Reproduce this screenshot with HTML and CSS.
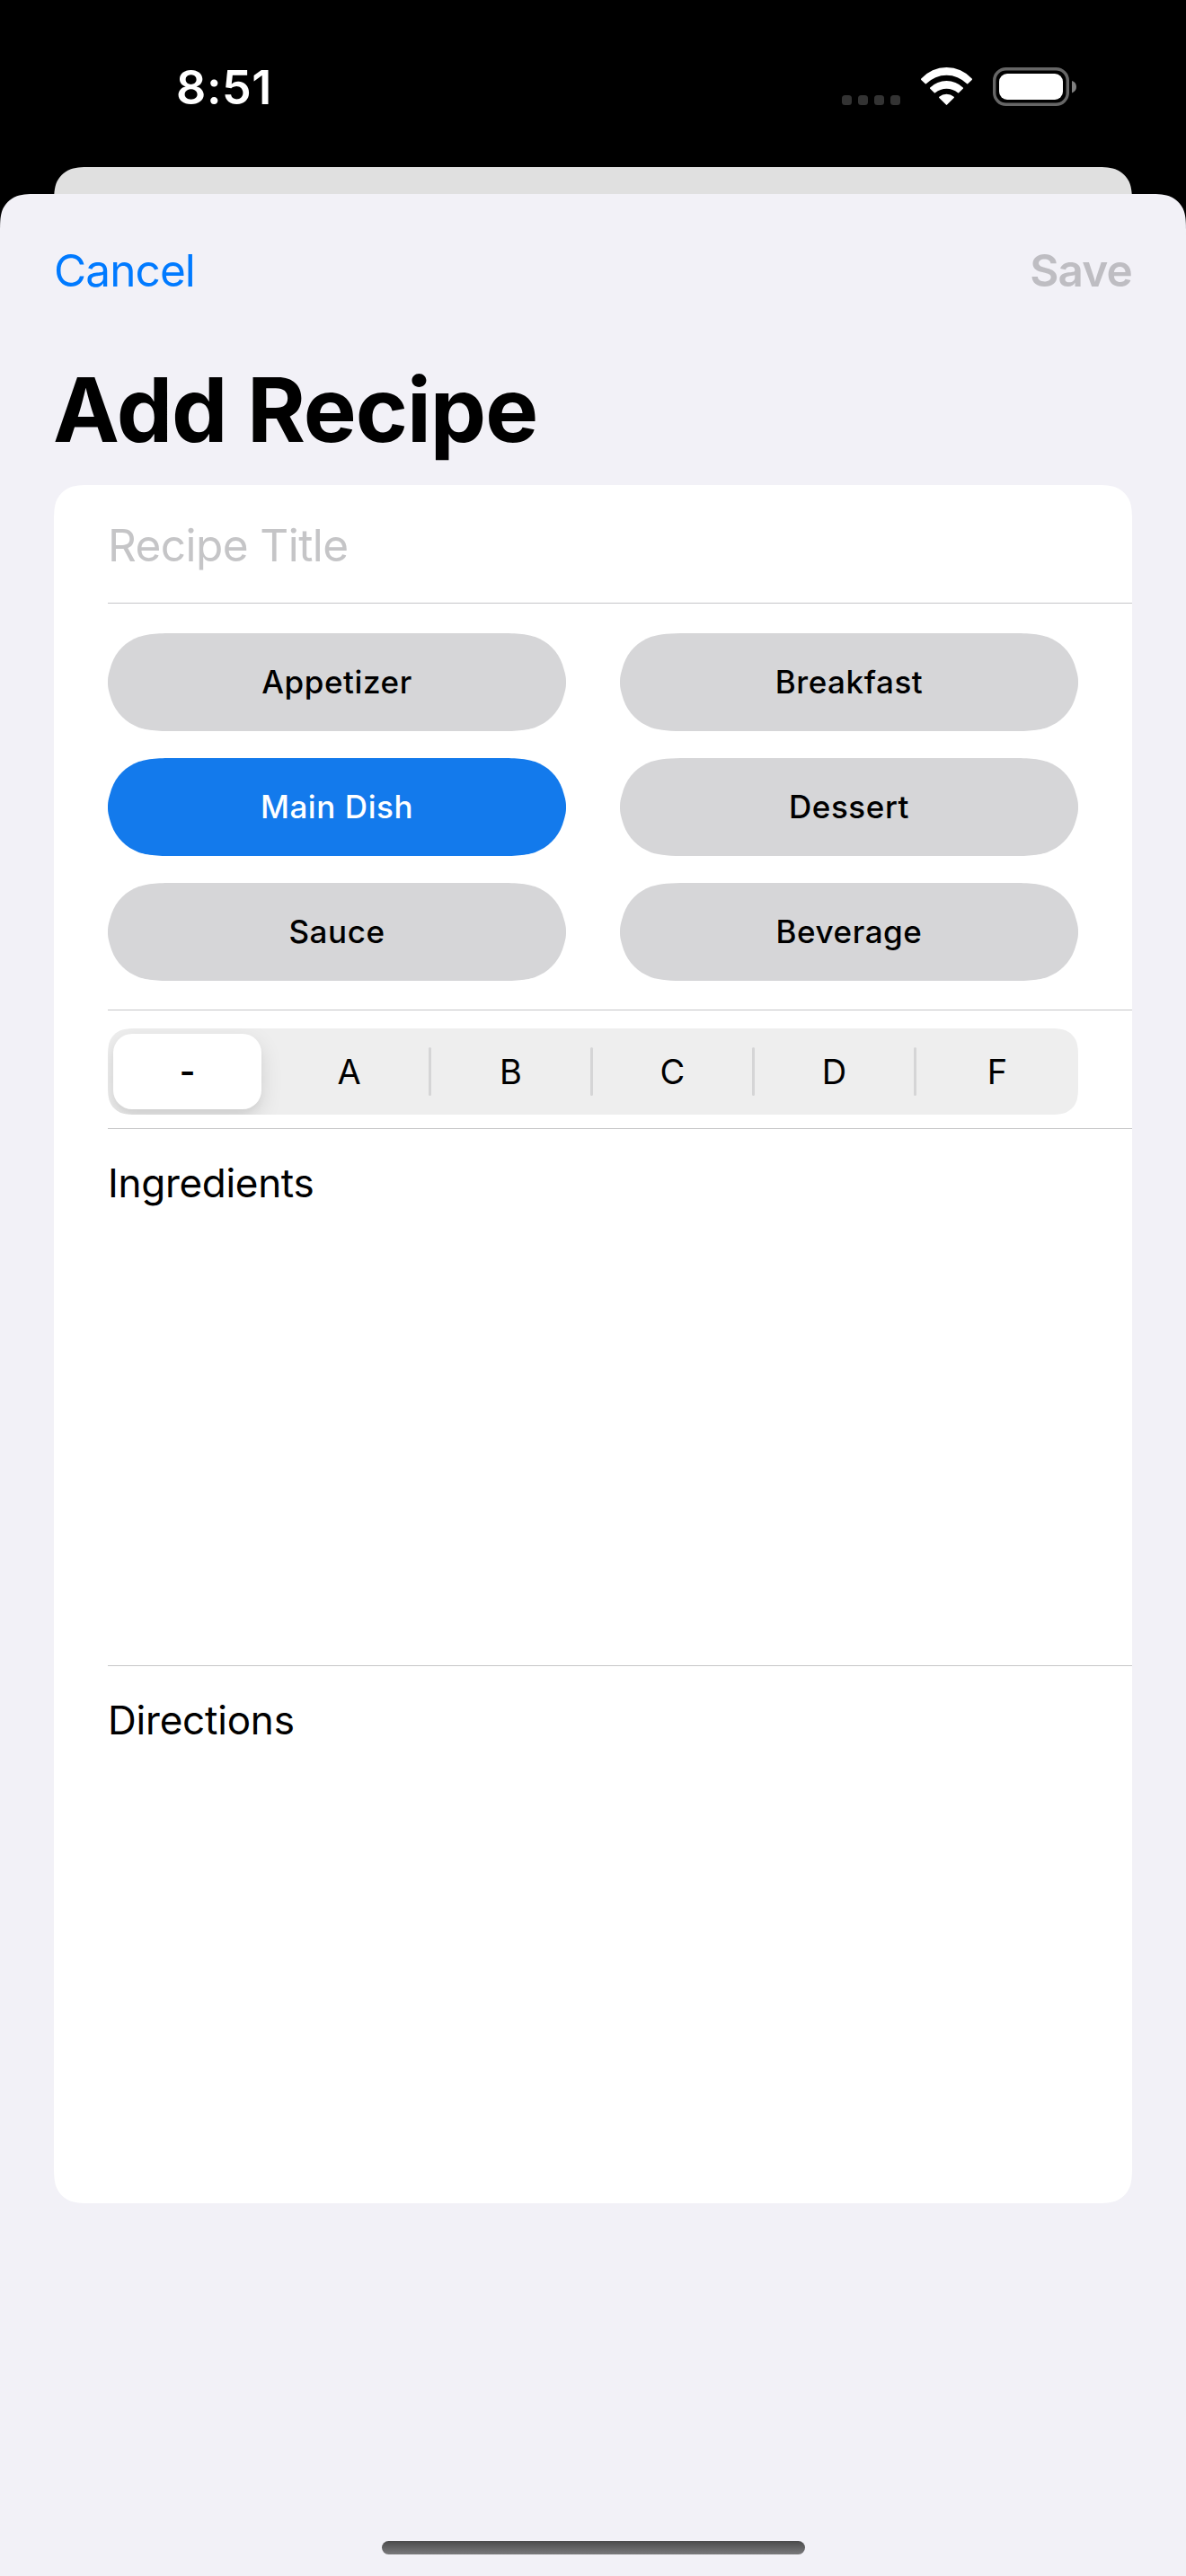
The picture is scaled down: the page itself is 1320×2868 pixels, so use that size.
FILE: index.html
```
<!DOCTYPE html>
<html lang="en">
<head>
<meta charset="utf-8">
<title>Add Recipe</title>
<link rel="stylesheet" href="styles.css">
</head>
<body>
<div class="screen">
  <header class="status-bar">
    <span class="time">8:51</span>
    <div class="status-icons">
      <div class="signal"><i></i><i></i><i></i><i></i></div>
      <svg class="wifi" width="57" height="43" viewBox="0 0 57 43" fill="#fff">
        <path d="M.3 12.6A37.9 37.9 0 0 1 56.7 12.6Q57.3 13.2 56.7 13.9L52.2 18.2Q51.6 18.8 50.9 18.1A31.6 31.6 0 0 0 6.1 18.1Q5.4 18.8 4.8 18.2L.3 13.9Q-.3 13.2 .3 12.6Z"/>
        <path d="M10.2 22.4A26.6 26.6 0 0 1 46.8 22.4Q47.4 23 46.8 23.7L42.2 28.3Q41.6 28.9 41 28.3A19.6 19.6 0 0 0 16 28.3Q15.4 28.9 14.8 28.3L10.2 23.7Q9.6 23 10.2 22.4Z"/>
        <path d="M20.3 32.8A12.6 12.6 0 0 1 36.7 32.8Q37.3 33.4 36.7 34L29.1 41.6Q28.5 42.2 27.9 41.6L20.3 34Q19.7 33.4 20.3 32.8Z"/>
      </svg>
      <svg class="battery" width="93" height="43" viewBox="0 0 93 43">
        <rect x="1.7" y="1.7" width="81.6" height="39.6" rx="13" fill="none" stroke="#666" stroke-width="3.4"/>
        <rect x="7" y="7" width="71" height="29" rx="9" fill="#fff"/>
        <path d="M88 15Q93 16.8 93 21.7T88 28.4Z" fill="#808080"/>
      </svg>
    </div>
  </header>
  <div class="back-sheet"></div>
  <main class="sheet">
    <nav class="nav">
      <span class="cancel">Cancel</span>
      <span class="save">Save</span>
    </nav>
    <h1 class="title">Add Recipe</h1>
    <section class="card">
      <div class="row field">Recipe Title</div>
      <div class="row categories">
        <span class="chip">Appetizer</span>
        <span class="chip">Breakfast</span>
        <span class="chip selected">Main Dish</span>
        <span class="chip">Dessert</span>
        <span class="chip">Sauce</span>
        <span class="chip">Beverage</span>
      </div>
      <div class="row grade">
        <div class="segments">
          <span class="segment active">-</span>
          <span class="segment">A</span>
          <span class="segment divided">B</span>
          <span class="segment divided">C</span>
          <span class="segment divided">D</span>
          <span class="segment divided">F</span>
        </div>
      </div>
      <div class="row notes">Ingredients</div>
      <div class="row notes directions">Directions</div>
    </section>
    <div class="home-indicator"></div>
  </main>
</div>
</body>
</html>
```
FILE: styles.css
```
* { box-sizing: border-box; }

body {
  margin: 0;
  background: #000;
  color: #000;
  font-family: Inter, "Liberation Sans", sans-serif;
}

.screen {
  display: flex;
  flex-direction: column;
  width: 1320px;
  height: 2868px;
}

/* Status bar */
.status-bar {
  display: flex;
  justify-content: space-between;
  align-items: flex-start;
  height: 186px;
  padding: 68px 122px 0 196px;
}

.time {
  color: #fff;
  font-size: 52px;
  font-weight: 600;
  line-height: 60px;
  letter-spacing: 0.6px;
}

.status-icons {
  display: flex;
  gap: 23px;
  padding-top: 7px;
}

.signal {
  display: flex;
  align-items: flex-end;
  gap: 7px;
  height: 42px;
}

.signal i {
  width: 11px;
  height: 11px;
  border-radius: 3.5px;
  background: #333;
}

/* Sheets */
.back-sheet {
  height: 30px;
  margin: 0 60px;
  background: #e0e0e0;
  clip-path: path("M0,60V45.9C0,32.7 0,26.1 2.25,18.9C5.1,11.2 11.2,5.1 18.9,2.25C26.1,0 32.7,0 45.9,0H1154.1C1167.3,0 1173.9,0 1181.1,2.25C1188.8,5.1 1194.9,11.2 1197.75,18.9C1200,26.1 1200,32.7 1200,45.9V60Z");
}

.sheet {
  display: flex;
  flex-direction: column;
  flex: 1;
  padding: 0 60px 24px;
  background: #f2f1f7;
  clip-path: path("M0,2652V45.9C0,32.7 0,26.1 2.25,18.9C5.1,11.2 11.2,5.1 18.9,2.25C26.1,0 32.7,0 45.9,0H1274.1C1287.3,0 1293.9,0 1301.1,2.25C1308.8,5.1 1314.9,11.2 1317.75,18.9C1320,26.1 1320,32.7 1320,45.9V2652Z");
}

.nav {
  display: flex;
  justify-content: space-between;
  align-items: center;
  height: 170px;
  font-size: 49.5px;
  line-height: 60px;
}

.cancel {
  color: #007aff;
  letter-spacing: -0.9px;
}

.save {
  color: #bebdc2;
  font-weight: 600;
  letter-spacing: -0.85px;
}

.title {
  margin: 10px 0 24px -1px;
  font-size: 99px;
  font-weight: 700;
  line-height: 120px;
  letter-spacing: -1px;
}

/* Form card */
.card {
  height: 1913px;
  padding-left: 60px;
  background: #fff;
  clip-path: path("M45.9,0H1154.1C1167.3,0 1173.9,0 1181.1,2.25C1188.8,5.1 1194.9,11.2 1197.75,18.9C1200,26.1 1200,32.7 1200,45.9V1867.1C1200,1880.3 1200,1886.9 1197.75,1894.1C1194.9,1901.8 1188.8,1907.9 1181.1,1910.75C1173.9,1913 1167.3,1913 1154.1,1913H45.9C32.7,1913 26.1,1913 18.9,1910.75C11.2,1907.9 5.1,1901.8 2.25,1894.1C0,1886.9 0,1880.3 0,1867.1V45.9C0,32.7 0,26.1 2.25,18.9C5.1,11.2 11.2,5.1 18.9,2.25C26.1,0 32.7,0 45.9,0Z");
}

.row { border-bottom: 1px solid #c6c6c8; }
.row:last-child { border-bottom: 0; }

.field {
  height: 132px;
  padding-top: 3px;
  color: #c5c5c7;
  font-size: 49.5px;
  line-height: 128px;
  letter-spacing: -0.57px;
}

.categories {
  display: grid;
  grid-template-columns: 510px 510px;
  grid-auto-rows: 109px;
  gap: 30px 60px;
  height: 453px;
  padding-top: 33px;
}

.chip {
  background: #d6d6d8;
  font-size: 35px;
  font-weight: 500;
  line-height: 109px;
  letter-spacing: 0.58px;
  text-align: center;
  clip-path: path("M83.3,0H426.7C450.7,0 462.7,0 475.6,4.1C489.7,9.2 500.8,20.3 505.9,34.4C510,47.3 510,50 510,54.5C510,59 510,61.7 505.9,74.6C500.8,88.7 489.7,99.8 475.6,104.9C462.7,109 450.7,109 426.7,109H83.3C59.3,109 47.3,109 34.4,104.9C20.3,99.8 9.2,88.7 4.1,74.6C0,61.7 0,59 0,54.5C0,50 0,47.3 4.1,34.4C9.2,20.3 20.3,9.2 34.4,4.1C47.3,0 59.3,0 83.3,0Z");
}

.chip.selected {
  background: #137aec;
  color: #fff;
}

.grade {
  height: 132px;
  padding-top: 20px;
}

.segments {
  display: grid;
  grid-template-columns: 177px repeat(4, 180px) 183px;
  width: 1080px;
  height: 96px;
  background: #eee;
  clip-path: path("M36.7,0H1043.3C1053.9,0 1059.2,0 1064.8,1.8C1071.1,4.1 1075.9,8.9 1078.2,15.2C1080,20.8 1080,26.1 1080,36.7V59.3C1080,69.9 1080,75.2 1078.2,80.8C1075.9,87.1 1071.1,91.9 1064.8,94.2C1059.2,96 1053.9,96 1043.3,96H36.7C26.1,96 20.8,96 15.2,94.2C8.9,91.9 4.1,87.1 1.8,80.8C0,75.2 0,69.9 0,59.3V36.7C0,26.1 0,20.8 1.8,15.2C4.1,8.9 8.9,4.1 15.2,1.8C20.8,0 26.1,0 36.7,0Z");
}

.segment {
  display: flex;
  align-items: center;
  justify-content: center;
  padding-left: 3px;
  font-size: 38px;
  line-height: 60px;
}

.segment.active {
  margin: 6px;
  padding: 0;
  border-radius: 21px;
  background: #fff;
  box-shadow: 0 9px 24px rgba(0, 0, 0, 0.12), 0 6px 6px rgba(0, 0, 0, 0.03);
  font-weight: 600;
}

.segment.divided {
  padding: 0;
}

.segment.divided::before {
  content: "";
  width: 3px;
  height: 54px;
  margin-right: auto;
  border-radius: 2px;
  background: #d5d5d6;
}

.segment.divided::after {
  content: "";
  margin-left: auto;
}

.notes {
  height: 598px;
  padding-top: 30px;
  font-size: 44px;
  line-height: 60px;
  letter-spacing: -0.3px;
}

.directions { letter-spacing: -0.2px; }

.home-indicator {
  width: 471px;
  height: 15px;
  margin: auto auto 0;
  border-radius: 8px;
  background: linear-gradient(#4a4a4b, #7a7a7c);
}
```
